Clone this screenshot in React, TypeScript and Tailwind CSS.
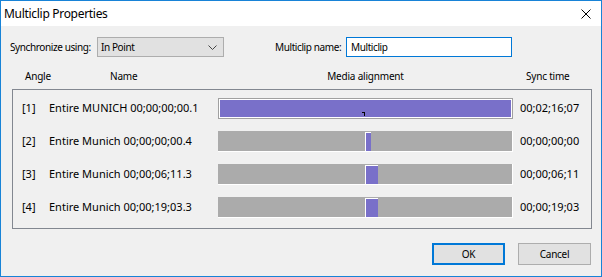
const rows = [
  { angle: "[1]", name: "Entire MUNICH 00;00;00;00.1", sync: "00;02;16;07", full: true, thumb: 0 },
  { angle: "[2]", name: "Entire Munich 00;00;00;00.4", sync: "00;00;00;00", full: false, thumb: 6 },
  { angle: "[3]", name: "Entire Munich 00;00;06;11.3", sync: "00;00;06;11", full: false, thumb: 13 },
  { angle: "[4]", name: "Entire Munich 00;00;19;03.3", sync: "00;00;19;03", full: false, thumb: 13 },
];

function AlignBar({ full, thumb }: { full: boolean; thumb: number }) {
  if (full) {
    return (
      <div className="relative w-[295px] h-[21px] border border-[#a0a0a0]">
        <div className="h-full border border-white bg-[#7970c9]" />
        <svg className="absolute left-[143px] top-[13px]" width="4" height="4" viewBox="0 0 4 4">
          <path d="M0 0h3v4h-1v-3h-2z" fill="#000" />
        </svg>
      </div>
    );
  }
  return (
    <div className="relative w-[295px] h-[21px] bg-[#ababab] border-b border-r border-white">
      <div
        className="absolute left-[147px] top-[1px] h-[19px] border-t border-l border-white bg-[#7970c9]"
        style={{ width: thumb }}
      />
    </div>
  );
}

export default function App() {
  return (
    <div
      className="w-[602px] h-[277px] border border-[#1883d7] bg-[#f0f0f0] flex flex-col text-[11px] text-black whitespace-nowrap"
      style={{ fontFamily: '"Noto Sans", sans-serif' }}
    >
      <div className="h-[25px] bg-white flex items-center justify-between pl-[3px] pr-[10px] text-[12px]">
        <span className="tracking-[-0.3px]">Multiclip Properties</span>
        <svg width="10" height="10" viewBox="0 0 10 10">
          <path d="M0.5 0.5L9.5 9.5M9.5 0.5L0.5 9.5" stroke="#000" strokeWidth="1" />
        </svg>
      </div>

      <div className="flex items-center mt-[11px] pl-[9px] h-[20px] text-[10px] tracking-[-0.4px]">
        <span className="w-[87px]">Synchronize using:</span>
        <div className="w-[127px] h-[20px] border border-[#adadad] bg-[#e1e1e1] flex items-center justify-between pl-[3px] pr-[6px]">
          <span>In Point</span>
          <svg width="9" height="5" viewBox="0 0 9 5">
            <path d="M0.5 0.5L4.5 4.5L8.5 0.5" stroke="#444" fill="none" />
          </svg>
        </div>
        <span className="ml-[51px] w-[71px]">Multiclip name:</span>
        <div className="w-[166px] h-[20px] border border-[#0078d7] bg-white flex items-center pl-[4px]">
          Multiclip
        </div>
      </div>

      <div className="flex items-center mt-[9px] h-[20px] text-[10px] tracking-[-0.2px]">
        <span className="ml-[24px] w-[85px]">Angle</span>
        <span className="w-[108px]">Name</span>
        <span className="w-[295px] text-center">Media alignment</span>
        <span className="ml-[13px]">Sync time</span>
      </div>

      <div className="ml-[11px] mt-[3px] w-[580px] h-[140px] border border-[#828790] pt-[2px]">
        {rows.map((r) => (
          <div key={r.angle} className="flex items-center h-[33px]">
            <span className="ml-[9px] w-[27px]">{r.angle}</span>
            <span className="w-[169px]">{r.name}</span>
            <AlignBar full={r.full} thumb={r.thumb} />
            <span className="ml-[7px]">{r.sync}</span>
          </div>
        ))}
      </div>

      <div className="flex justify-end gap-[13px] mt-[14px] pr-[10px] text-[10px] tracking-[-0.3px]">
        <button className="w-[73px] h-[22px] border-2 border-[#0078d7] bg-[#e1e1e1]">OK</button>
        <button className="w-[73px] h-[22px] border border-[#adadad] bg-[#e1e1e1]">Cancel</button>
      </div>
    </div>
  );
}
